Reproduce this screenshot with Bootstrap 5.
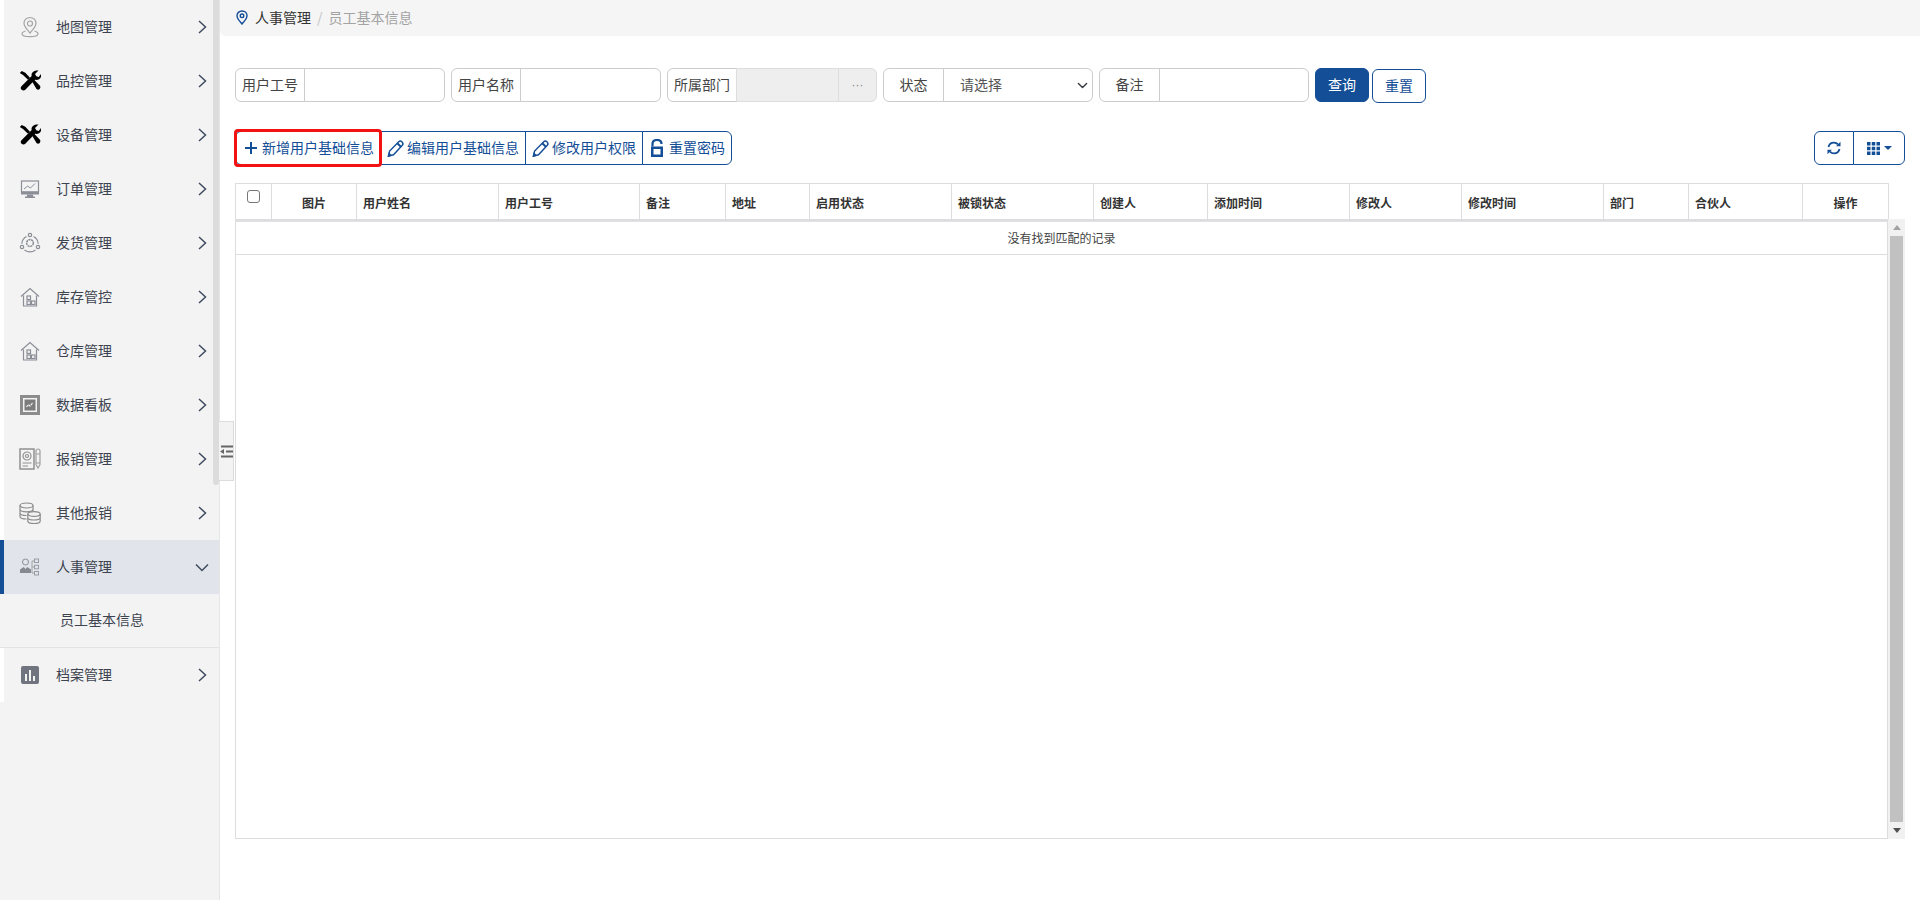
<!DOCTYPE html>
<html lang="zh-CN">
<head>
<meta charset="utf-8">
<title>员工基本信息</title>
<link href="https://cdn.jsdelivr.net/npm/bootstrap@5.3.0/dist/css/bootstrap.min.css" rel="stylesheet">
<style>
html,body{height:100%;overflow:hidden;background:#fff}
body{font-family:"Noto Sans CJK SC","Liberation Sans",sans-serif;font-size:14px;color:#333}
.app-shell{height:900px}
.side-panel{width:220px;flex:none;background:#f3f3f3;border-right:1px solid #e6e6e6;position:relative}
.side-thumb{position:absolute;left:213px;top:0;width:6px;height:485px;background:#dcdcdc;border-radius:0 0 3px 3px}
.side-row{height:54px;border-left:4px solid #fff;color:#3d4450;padding-right:12px;text-decoration:none}
.side-row span{padding-bottom:2px}
.side-row.is-active{background:#e1e4ea;border-left-color:#134e97}
.side-row.is-active .side-chev{margin-right:-2px}
.side-ico{width:22px;height:22px;margin:0 15px;flex:none;color:#8b8e97}
.side-sub{height:54px;padding-left:60px;padding-bottom:2px;border-bottom:1px solid #e3e3e3;color:#3d4450}
.side-chev{margin-left:auto;flex:none}
.collapse-tab{position:absolute;left:219px;top:421px;width:15px;height:60px;background:#f3f3f3;border:1px solid #ddd;border-left:0}
.main-pane{padding:0 15px 0 15px;min-width:0}
.crumb-bar{height:36px;margin:0 -15px 32px;padding-left:16px;background:#f5f5f5;border-bottom-left-radius:5px;--bs-breadcrumb-margin-bottom:0;--bs-breadcrumb-item-padding-x:6px;--bs-breadcrumb-divider-color:#c4c4c4;--bs-breadcrumb-item-active-color:#a3a3a3}
.crumb-bar .breadcrumb-item{line-height:34px}
.crumb-root{color:#333}
.crumb-pin{margin-right:7px;vertical-align:-2px}
.filter-row{height:34px;margin-bottom:29px;gap:6px}
.filter-group{width:210px;flex-wrap:nowrap}
.filter-group .input-group-text{background:#fff;border-color:#ccc;padding:0 6px 1px;width:70px;color:#444;justify-content:center;font-size:14px}
.filter-group.wide-label .input-group-text{width:61px}
.filter-group .form-control,.filter-group .form-select{border-color:#ccc;font-size:14px;height:34px;min-height:0;padding:0 6px}
.filter-group .form-select{padding-left:16px;padding-bottom:1px;color:#555;background-position:right 3px center;background-size:13px 11px}
.filter-group .form-control[readonly]{background:#eee;border-color:#ddd}
.filter-group .dots-btn{width:39px;background:#eee;border:1px solid #ddd;color:#888;padding:0;font-family:"Liberation Sans",sans-serif;font-size:12px;line-height:1}
.brand-btn{background:#134e97;border-color:#134e97;color:#fff;width:54px;height:34px;padding:0 0 1px;font-size:14px}
.brand-btn:hover{background:#134e97;color:#fff}
.line-btn{background:#fff;border-color:#134e97;color:#134e97;height:34px;padding:0 6px 2px;font-size:14px;display:inline-flex;align-items:center;white-space:nowrap}
.line-btn:hover{background:#fff;color:#134e97;border-color:#134e97}
.reset-btn{width:54px;margin:1px 0 0 -3px;justify-content:center;padding:0 0 2px}
.tool-row{height:34px;margin-bottom:18px}
.mark-btn{z-index:3}
.red-frame{position:absolute;left:-2px;right:-2px;top:-3px;bottom:-3px;border:3px solid #f21212;border-radius:4px;pointer-events:none}
.tool-ico{width:20px;height:18px;flex:none;margin-top:2px}
.plus-ico{width:12px;height:12px;margin:2px 5px 0 3px;flex:none}
.narrow-refresh{width:40px;padding:0}
.narrow-cols{width:52px;padding:0}
.grid-head,.grid-body{table-layout:fixed;width:1653px;margin:0;--bs-table-border-color:#ddd;font-size:12px;color:#333}
.grid-head th{height:36px;padding:3px 6px 0;font-weight:700;vertical-align:middle;border-color:#ddd;color:#333}
.grid-head td{height:1px;padding:0;font-size:0;line-height:0;border-bottom:0}
.head-check{width:13px;height:13px;margin:0;display:block;position:relative;top:-5px;left:11px;border-color:#777;border-radius:3px}
.grid-row{height:618px}
.grid-pane{width:1653px;flex:none;border:1px solid #ddd;border-top:0}
.grid-body{width:1651px;border-collapse:collapse}
.grid-body td{height:33px;padding:0;text-align:center;vertical-align:middle;border-top:1px solid #dee2e6;border-bottom:1px solid #ddd;color:#444;line-height:32px}
.fake-scroll{width:17px;height:620px;margin-top:-2px;flex:none;background:#f1f1f1;padding:0 2px}
.fake-cap{height:17px;flex:none}
.fake-thumb{flex:1;background:#c1c1c1}
.tri-up{width:0;height:0;border:4px solid transparent;border-top:0;border-bottom:5px solid #a3a3a3}
.tri-down{width:0;height:0;border:4px solid transparent;border-bottom:0;border-top:5px solid #505050}
</style>
</head>
<body>
<div class="app-shell d-flex">
  <aside class="side-panel">
    <ul class="list-unstyled m-0">
      <li class="side-row d-flex align-items-center">
        <svg class="side-ico" viewBox="0 0 22 22" fill="none" stroke="#a5a5a5" stroke-width="1.2"><path d="M11 1.5c-3.6 0-6 2.6-6 5.8 0 3.4 3.4 6.6 6 9.7 2.6-3.1 6-6.3 6-9.7 0-3.200-2.400-5.800-6-5.800z"/><circle cx="11" cy="7.500" r="2.500"/><path d="M6.500 15c-2 .6-3.500 1.500-3.500 2.700 0 1.700 3.600 3 8 3s8-1.300 8-3c0-1.200-1.500-2.100-3.500-2.700"/></svg>
        <span>地图管理</span>
        <svg class="side-chev" width="9" height="14" viewBox="0 0 9 14" fill="none" stroke="#3f4c60" stroke-width="1.500"><path d="M1 1l6.500 6L1 13"/></svg>
      </li>
      <li class="side-row d-flex align-items-center">
        <svg class="side-ico" viewBox="0 0 22 22" fill="#000"><path d="M19.500 .5L16 4l1.300 2.300 2.400.6L22.500 3.500C23 7.500 20 10.500 16 9.800L6.300 19.800c-1.500 1.600-4.600.3-4.600-1.700 0-.9.400-1.400 1-2L12.700 6C11.700 2.800 15 0 19.500 .5z"/><path d="M.8 3L2.800.9l3.500 1.800 4.700 5-2 2-5-4.700zM13.200 11.800l2-2 5.500 5.800c1 1.100.8 2.400 0 3.300-1 1-2.300 1-3.200 0z"/></svg>
        <span>品控管理</span>
        <svg class="side-chev" width="9" height="14" viewBox="0 0 9 14" fill="none" stroke="#3f4c60" stroke-width="1.500"><path d="M1 1l6.500 6L1 13"/></svg>
      </li>
      <li class="side-row d-flex align-items-center">
        <svg class="side-ico" viewBox="0 0 22 22" fill="#000"><path d="M19.500 .5L16 4l1.300 2.300 2.400.6L22.500 3.500C23 7.500 20 10.500 16 9.800L6.300 19.800c-1.500 1.600-4.600.3-4.600-1.700 0-.9.400-1.400 1-2L12.700 6C11.700 2.800 15 0 19.500 .5z"/><path d="M.8 3L2.800.9l3.500 1.800 4.700 5-2 2-5-4.700zM13.200 11.800l2-2 5.500 5.800c1 1.100.8 2.400 0 3.300-1 1-2.300 1-3.200 0z"/></svg>
        <span>设备管理</span>
        <svg class="side-chev" width="9" height="14" viewBox="0 0 9 14" fill="none" stroke="#3f4c60" stroke-width="1.500"><path d="M1 1l6.500 6L1 13"/></svg>
      </li>
      <li class="side-row d-flex align-items-center">
        <svg class="side-ico" viewBox="0 0 22 22" fill="none"><rect x="2.500" y="3" width="17" height="11" fill="#f3f3f3" stroke="#8b8e97" stroke-width="1.200"/><path d="M2 13.500h18v3H2z" fill="#8b8e97"/><path d="M8 16.500h6v2H8zM6 18.500h10v1.500H6z" fill="#8b8e97"/><path d="M5 11l3.500-3 3 2L16 5.500" stroke="#8b8e97"/></svg>
        <span>订单管理</span>
        <svg class="side-chev" width="9" height="14" viewBox="0 0 9 14" fill="none" stroke="#3f4c60" stroke-width="1.500"><path d="M1 1l6.500 6L1 13"/></svg>
      </li>
      <li class="side-row d-flex align-items-center">
        <svg class="side-ico" viewBox="0 0 22 22" fill="none" stroke="#8b8e97" stroke-width="1.200"><circle cx="11" cy="11" r="3.400" stroke-width="1.500" stroke-dasharray="2.200 .6"/><circle cx="11" cy="3" r="1.700"/><circle cx="3" cy="15" r="1.700"/><circle cx="19" cy="15" r="1.700"/><path d="M7.500 4.500C4.500 6 3 8.500 2.800 11.800M14.500 4.500c3 1.500 4.500 4 4.700 7.300M5.500 18c3.500 2.500 7.500 2.500 11 0"/></svg>
        <span>发货管理</span>
        <svg class="side-chev" width="9" height="14" viewBox="0 0 9 14" fill="none" stroke="#3f4c60" stroke-width="1.500"><path d="M1 1l6.500 6L1 13"/></svg>
      </li>
      <li class="side-row d-flex align-items-center">
        <svg class="side-ico" viewBox="0 0 22 22" fill="none" stroke="#8b8e97" stroke-width="1.200"><path d="M2 10.500L11 2.500l9 8"/><path d="M4.500 9.500v10.500h13V9.500"/><rect x="8" y="10" width="3.500" height="3.500"/><rect x="8" y="15" width="3.500" height="3.500"/><rect x="12.500" y="15" width="3.500" height="3.500"/></svg>
        <span>库存管控</span>
        <svg class="side-chev" width="9" height="14" viewBox="0 0 9 14" fill="none" stroke="#3f4c60" stroke-width="1.500"><path d="M1 1l6.500 6L1 13"/></svg>
      </li>
      <li class="side-row d-flex align-items-center">
        <svg class="side-ico" viewBox="0 0 22 22" fill="none" stroke="#8b8e97" stroke-width="1.200"><path d="M2 10.500L11 2.500l9 8"/><path d="M4.500 9.500v10.500h13V9.500"/><rect x="8" y="10" width="3.500" height="3.500"/><rect x="8" y="15" width="3.500" height="3.500"/><rect x="12.500" y="15" width="3.500" height="3.500"/></svg>
        <span>仓库管理</span>
        <svg class="side-chev" width="9" height="14" viewBox="0 0 9 14" fill="none" stroke="#3f4c60" stroke-width="1.500"><path d="M1 1l6.500 6L1 13"/></svg>
      </li>
      <li class="side-row d-flex align-items-center">
        <svg class="side-ico" viewBox="0 0 22 22" fill="none"><rect x="2.500" y="2.500" width="17" height="17" stroke="#8c8c8c" stroke-width="3" fill="#f3f3f3"/><rect x="5.500" y="5.500" width="11" height="11" fill="#7c7c7c"/><path d="M7.500 13l2-2.500 1.500 1.500 3-3.500" stroke="#f3f3f3" stroke-width="1.200" stroke-dasharray="2.500 .8"/></svg>
        <span>数据看板</span>
        <svg class="side-chev" width="9" height="14" viewBox="0 0 9 14" fill="none" stroke="#3f4c60" stroke-width="1.500"><path d="M1 1l6.500 6L1 13"/></svg>
      </li>
      <li class="side-row d-flex align-items-center">
        <svg class="side-ico" viewBox="0 0 22 22" fill="none" stroke="#909090" stroke-width="1.200"><rect x="1" y="1" width="14" height="20" stroke-width="1.500"/><circle cx="8" cy="8" r="4"/><circle cx="8" cy="8" r="1.500"/><path d="M3.500 15h9M3.500 18h5.500"/><path d="M19 1c1.200 0 2 .8 2 2v13.500L19 20l-2-3.500V3c0-1.200.8-2 2-2zM17 6h4M17 15h4" stroke="#a0a0a0"/></svg>
        <span>报销管理</span>
        <svg class="side-chev" width="9" height="14" viewBox="0 0 9 14" fill="none" stroke="#3f4c60" stroke-width="1.500"><path d="M1 1l6.500 6L1 13"/></svg>
      </li>
      <li class="side-row d-flex align-items-center">
        <svg class="side-ico" viewBox="0 0 22 22" fill="none" stroke="#8b8b8b" stroke-width="1.200"><ellipse cx="7.500" cy="3.500" rx="6.500" ry="2.500"/><path d="M1 3.500v11c0 1.400 3 2.500 6.500 2.500M1 7.300c0 1.400 3 2.500 6.500 2.500s6.500-1.100 6.500-2.500M1 11c0 1.400 3 2.500 6.500 2.500M14 3.500V9"/><ellipse cx="15" cy="12" rx="6.200" ry="2.400"/><path d="M8.800 12v7c0 1.400 2.800 2.500 6.200 2.500s6.200-1.100 6.200-2.500v-7M8.800 15.500c0 1.400 2.800 2.500 6.200 2.500s6.200-1.100 6.200-2.500"/></svg>
        <span>其他报销</span>
        <svg class="side-chev" width="9" height="14" viewBox="0 0 9 14" fill="none" stroke="#3f4c60" stroke-width="1.500"><path d="M1 1l6.500 6L1 13"/></svg>
      </li>
      <li class="side-row is-active d-flex align-items-center">
        <svg class="side-ico" viewBox="0 0 22 22" fill="none"><circle cx="6.500" cy="6" r="3" stroke="#8b8e97"/><path d="M1 17v-3.500L4.800 11l1.700 2 1.700-2 3.800 2.500V17z" fill="#868992"/><path d="M13 5h2.500M13 5v12h2.500M13 11h2.500" stroke="#a3a3a3"/><rect x="15.500" y="3" width="4" height="3.500" stroke="#9a9da6"/><rect x="15.500" y="9.300" width="4" height="3.500" stroke="#9a9da6"/><rect x="15.500" y="15.500" width="4" height="3.500" stroke="#9a9da6"/></svg>
        <span>人事管理</span>
        <svg class="side-chev" width="14" height="9" viewBox="0 0 14 9" fill="none" stroke="#3f4c60" stroke-width="1.500"><path d="M1 1.500l6 6 6-6"/></svg>
      </li>
      <li class="side-sub d-flex align-items-center">员工基本信息</li>
      <li class="side-row d-flex align-items-center">
        <svg class="side-ico" viewBox="0 0 22 22"><rect x="2" y="2" width="18" height="18" rx="2" fill="#70747f"/><path d="M6 10h2v7H6zM10 6h2v11h-2zM14 12h2v5h-2z" fill="#f3f3f3"/></svg>
        <span>档案管理</span>
        <svg class="side-chev" width="9" height="14" viewBox="0 0 9 14" fill="none" stroke="#3f4c60" stroke-width="1.500"><path d="M1 1l6.500 6L1 13"/></svg>
      </li>
    </ul>
    <div class="side-thumb"></div>
    <div class="collapse-tab d-flex align-items-center justify-content-center">
      <svg width="13" height="13" viewBox="0 0 13 13"><path d="M1 .5h12v2H1zM1 10.500h12v2H1zM6 5.500h7v2H6z" fill="#666"/><path d="M4 4v5L0 6.500z" fill="#666"/></svg>
    </div>
  </aside>
  <main class="main-pane flex-grow-1">
    <nav aria-label="breadcrumb">
      <ol class="breadcrumb crumb-bar">
        <li class="breadcrumb-item crumb-root"><svg class="crumb-pin" width="12" height="15" viewBox="0 0 12 15" fill="none" stroke="#134e97" stroke-width="1.400"><path d="M6 1C3 1 1 3.100 1 5.700 1 8.700 4 11.500 6 14c2-2.500 5-5.300 5-8.300C11 3.100 9 1 6 1z"/><circle cx="6" cy="5.800" r="1.800"/></svg>人事管理</li>
        <li class="breadcrumb-item active" aria-current="page">员工基本信息</li>
      </ol>
    </nav>
    <form class="filter-row d-flex align-items-start">
      <div class="input-group filter-group"><span class="input-group-text">用户工号</span><input class="form-control" type="text"></div>
      <div class="input-group filter-group"><span class="input-group-text">用户名称</span><input class="form-control" type="text"></div>
      <div class="input-group filter-group"><span class="input-group-text">所属部门</span><input class="form-control" type="text" readonly><button class="btn dots-btn" type="button">···</button></div>
      <div class="input-group filter-group wide-label"><span class="input-group-text">状态</span><select class="form-select"><option>请选择</option></select></div>
      <div class="input-group filter-group wide-label"><span class="input-group-text">备注</span><input class="form-control" type="text"></div>
      <button class="btn brand-btn" type="button">查询</button>
      <button class="btn line-btn reset-btn" type="button">重置</button>
    </form>
    <div class="tool-row d-flex justify-content-between">
      <div class="btn-group">
        <button class="btn line-btn mark-btn" type="button"><svg class="plus-ico" viewBox="0 0 12 12"><path d="M5 0h2v5h5v2H7v5H5V7H0V5h5z" fill="#134e97"/></svg>新增用户基础信息<span class="red-frame"></span></button>
        <button class="btn line-btn" type="button"><svg class="tool-ico" viewBox="0 0 20 18" fill="none" stroke="#134e97" stroke-width="1.400"><path d="M1.500 17l1.100-5L11.500 3c1-1 2.600-1 3.600 0s1 2.600 0 3.600L6.500 15.800z"/><path d="M10.300 4.200l3.700 3.700" stroke-width="2"/><path d="M1.500 17l2.300-.6-1.700-1.700z" fill="#134e97"/></svg>编辑用户基础信息</button>
        <button class="btn line-btn" type="button"><svg class="tool-ico" viewBox="0 0 20 18" fill="none" stroke="#134e97" stroke-width="1.400"><path d="M1.500 17l1.100-5L11.500 3c1-1 2.600-1 3.600 0s1 2.600 0 3.600L6.500 15.800z"/><path d="M10.300 4.200l3.700 3.700" stroke-width="2"/><path d="M1.500 17l2.300-.6-1.700-1.700z" fill="#134e97"/></svg>修改用户权限</button>
        <button class="btn line-btn" type="button"><svg class="tool-ico" viewBox="0 0 20 18"><path d="M2 7.500h12V18H2zM4.500 10v5.500h7V10z" fill="#134e97" fill-rule="evenodd"/><path d="M3.500 7.500V5c0-2.500 2-4 4.500-4s4.500 1.500 4.500 4" fill="none" stroke="#134e97" stroke-width="2.200"/></svg>重置密码</button>
      </div>
      <div class="btn-group">
        <button class="btn line-btn narrow-refresh justify-content-center" type="button" aria-label="刷新"><svg width="14" height="14" viewBox="0 0 14 14" fill="none" stroke="#134e97" stroke-width="1.800"><path d="M1.500 6C2 3.500 4.200 1.600 7 1.600c1.700 0 3 .7 4 1.800"/><path d="M12.500 8c-.5 2.500-2.700 4.400-5.500 4.400-1.700 0-3-.7-4-1.800"/><path d="M13.500 .8v4.400H9.100z" fill="#134e97" stroke="none"/><path d="M.5 13.200V8.800h4.400z" fill="#134e97" stroke="none"/></svg></button>
        <button class="btn line-btn narrow-cols justify-content-center" type="button" aria-label="列"><svg width="13" height="13" viewBox="0 0 13 13" fill="#134e97"><path d="M0 0h3.500v3.500H0zM4.750 0h3.500v3.500h-3.500zM9.500 0H13v3.500H9.500zM0 4.750h3.500v3.500H0zM4.750 4.750h3.500v3.500h-3.500zM9.500 4.750H13v3.500H9.500zM0 9.500h3.500V13H0zM4.750 9.500h3.500V13h-3.500zM9.500 9.500H13V13H9.500z"/></svg><svg class="ms-1" width="8" height="4" viewBox="0 0 8 4"><path d="M0 0h8L4 4z" fill="#134e97"/></svg></button>
      </div>
    </div>
    <table class="table table-bordered grid-head">
      <colgroup><col width="36"><col width="85"><col width="142"><col width="141"><col width="86"><col width="84"><col width="142"><col width="142"><col width="114"><col width="142"><col width="112"><col width="142"><col width="85"><col width="114"><col width="86"></colgroup>
      <thead>
        <tr><th class="p-0"><input class="form-check-input head-check" type="checkbox" aria-label="全选"></th><th class="text-center">图片</th><th>用户姓名</th><th>用户工号</th><th>备注</th><th>地址</th><th>启用状态</th><th>被锁状态</th><th>创建人</th><th>添加时间</th><th>修改人</th><th>修改时间</th><th>部门</th><th>合伙人</th><th class="text-center">操作</th></tr>
        <tr><td></td><td></td><td></td><td></td><td></td><td></td><td></td><td></td><td></td><td></td><td></td><td></td><td></td><td></td><td></td></tr>
      </thead>
    </table>
    <div class="grid-row d-flex align-items-start">
      <div class="grid-pane h-100">
        <table class="grid-body"><tbody><tr><td>没有找到匹配的记录</td></tr></tbody></table>
      </div>
      <div class="fake-scroll d-flex flex-column">
        <div class="fake-cap d-flex align-items-center justify-content-center"><div class="tri-up"></div></div>
        <div class="fake-thumb"></div>
        <div class="fake-cap d-flex align-items-center justify-content-center"><div class="tri-down"></div></div>
      </div>
    </div>
  </main>
</div>
<script src="https://cdn.jsdelivr.net/npm/bootstrap@5.3.0/dist/js/bootstrap.bundle.min.js"></script>
</body>
</html>
